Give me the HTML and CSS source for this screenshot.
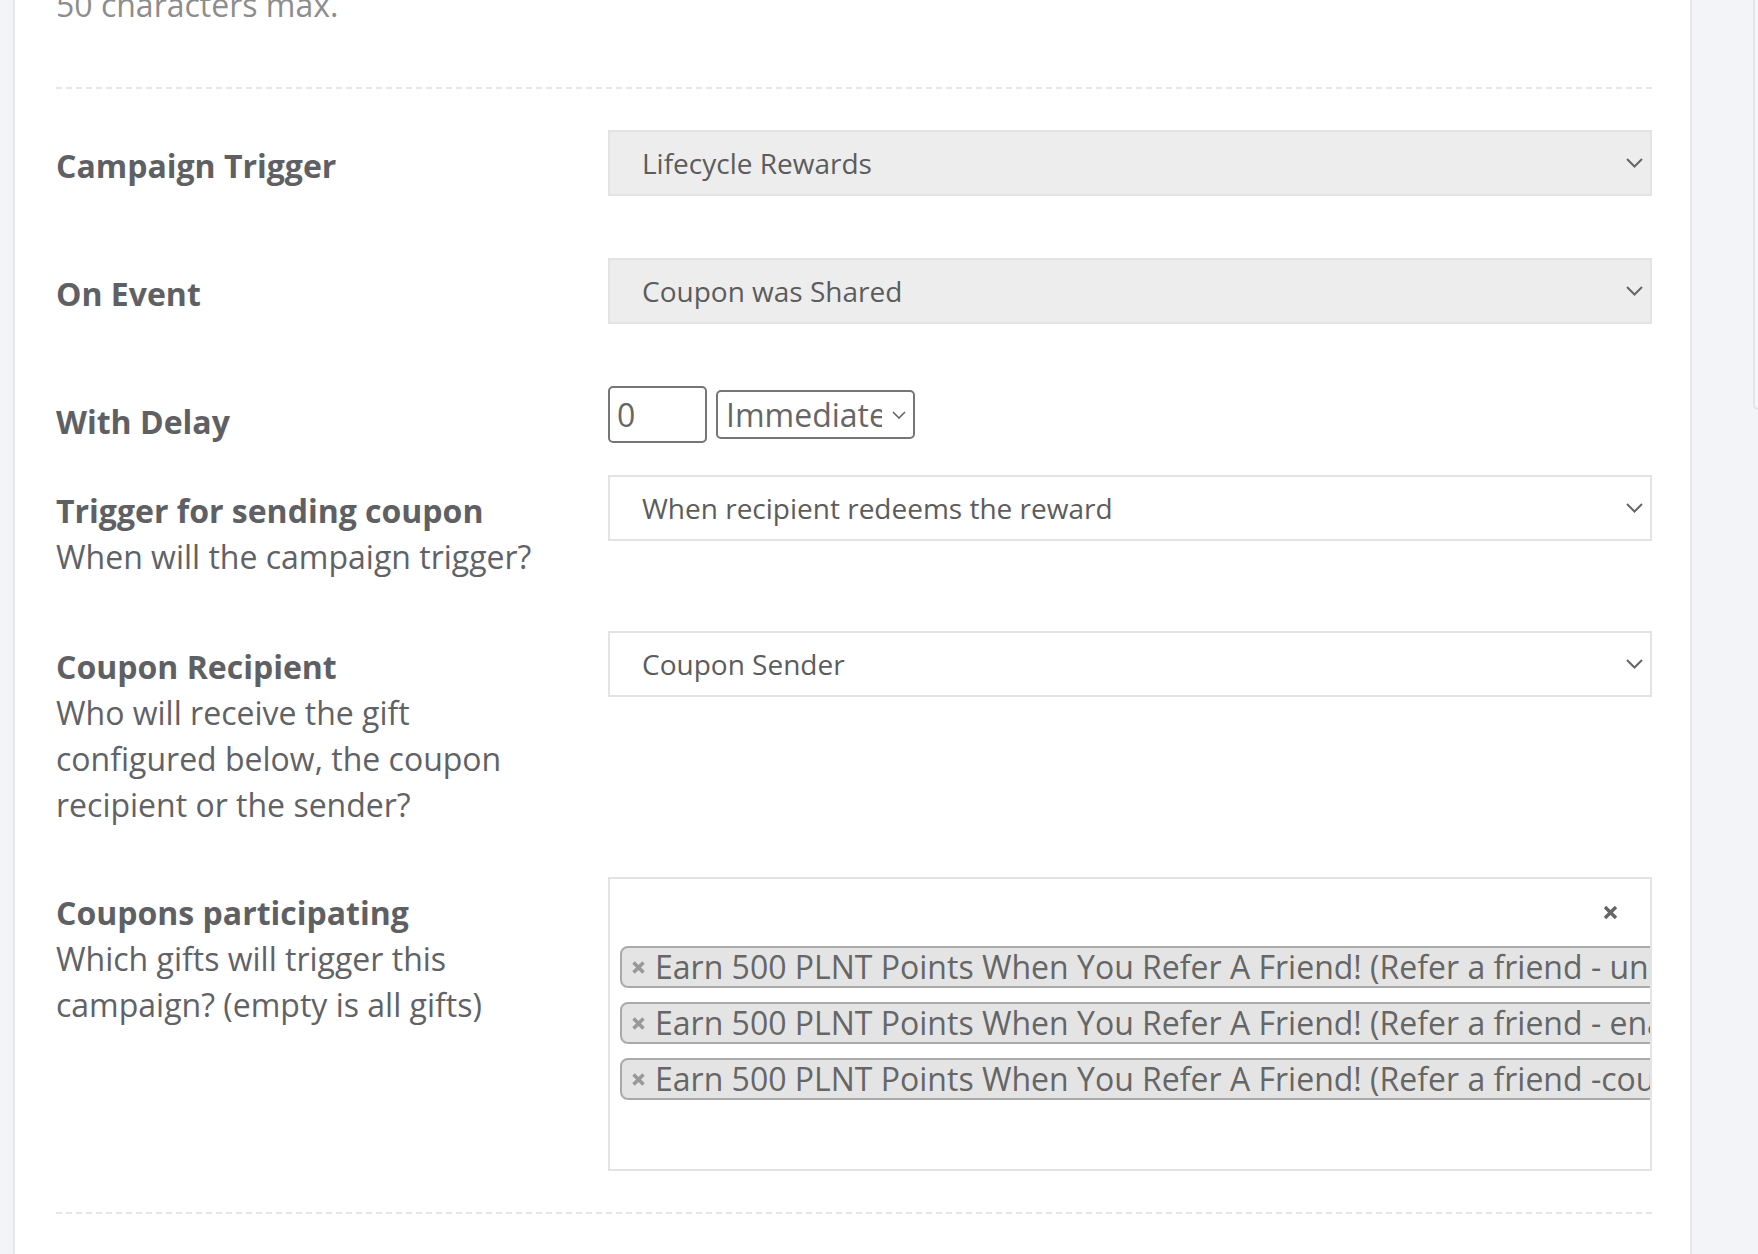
FILE: index.html
```html
<!DOCTYPE html>
<html lang="en">
<head>
    <meta charset="UTF-8">
    <meta name="viewport" content="width=device-width, initial-scale=1.0">
    <title>Campaign Settings</title>
    <link rel="stylesheet" href="styles.css">
</head>
<body>
    <div class="page">
        <div class="card">
            <p class="hint">50 characters max.</p>
            <div class="divider"></div>

            <div class="form-row row-wide">
                <label class="field-label">
                    <span class="title">Campaign Trigger</span>
                </label>
                <div class="field-control">
                    <div class="select-wrap">
                        <select class="select locked">
                            <option>Lifecycle Rewards</option>
                        </select>
                        <svg class="chevron" width="17" height="10" viewBox="0 0 17 10"><polyline points="1,1 8.5,8.5 16,1" fill="none" stroke="#666" stroke-width="2"/></svg>
                    </div>
                </div>
            </div>

            <div class="form-row row-wide">
                <label class="field-label">
                    <span class="title">On Event</span>
                </label>
                <div class="field-control">
                    <div class="select-wrap">
                        <select class="select locked">
                            <option>Coupon was Shared</option>
                        </select>
                        <svg class="chevron" width="17" height="10" viewBox="0 0 17 10"><polyline points="1,1 8.5,8.5 16,1" fill="none" stroke="#666" stroke-width="2"/></svg>
                    </div>
                </div>
            </div>

            <div class="form-row row-delay">
                <label class="field-label">
                    <span class="title">With Delay</span>
                </label>
                <div class="field-control delay">
                    <input type="text" class="delay-input" value="0">
                    <div class="select-wrap small">
                        <select class="delay-select">
                            <option>Immediate</option>
                            <option>Minutes</option>
                            <option>Hours</option>
                            <option>Days</option>
                        </select>
                        <svg class="chevron" width="14" height="8" viewBox="0 0 14 8"><polyline points="1,1 7,7 13,1" fill="none" stroke="#666" stroke-width="1.6"/></svg>
                    </div>
                </div>
            </div>

            <div class="form-row row-trigger">
                <label class="field-label">
                    <span class="title">Trigger for sending coupon</span>
                    When will the campaign trigger?
                </label>
                <div class="field-control">
                    <div class="select-wrap">
                        <select class="select">
                            <option>When recipient redeems the reward</option>
                        </select>
                        <svg class="chevron" width="17" height="10" viewBox="0 0 17 10"><polyline points="1,1 8.5,8.5 16,1" fill="none" stroke="#666" stroke-width="2"/></svg>
                    </div>
                </div>
            </div>

            <div class="form-row">
                <label class="field-label">
                    <span class="title">Coupon Recipient</span>
                    Who will receive the gift configured below, the coupon recipient or the sender?
                </label>
                <div class="field-control">
                    <div class="select-wrap">
                        <select class="select">
                            <option>Coupon Sender</option>
                            <option>Coupon Recipient</option>
                        </select>
                        <svg class="chevron" width="17" height="10" viewBox="0 0 17 10"><polyline points="1,1 8.5,8.5 16,1" fill="none" stroke="#666" stroke-width="2"/></svg>
                    </div>
                </div>
            </div>

            <div class="form-row row-last">
                <label class="field-label">
                    <span class="title">Coupons participating</span>
                    Which gifts will trigger this campaign? (empty is all gifts)
                </label>
                <div class="field-control">
                    <div class="multi">
                        <div class="multi-head">
                            <svg class="clear" width="15" height="15" viewBox="0 0 15 15"><path d="M2 2 L13 13 M13 2 L2 13" stroke="#666" stroke-width="3.4"/></svg>
                        </div>
                        <ul class="tags">
                            <li class="tag"><svg class="tag-x" width="13" height="13" viewBox="0 0 13 13"><path d="M1.5 1.5 L11.5 11.5 M11.5 1.5 L1.5 11.5" stroke="#999" stroke-width="3.6"/></svg>Earn 500 PLNT Points When You Refer A Friend! (Refer a friend - unique code)</li>
                            <li class="tag"><svg class="tag-x" width="13" height="13" viewBox="0 0 13 13"><path d="M1.5 1.5 L11.5 11.5 M11.5 1.5 L1.5 11.5" stroke="#999" stroke-width="3.6"/></svg>Earn 500 PLNT Points When You Refer A Friend! (Refer a friend - enabled)</li>
                            <li class="tag"><svg class="tag-x" width="13" height="13" viewBox="0 0 13 13"><path d="M1.5 1.5 L11.5 11.5 M11.5 1.5 L1.5 11.5" stroke="#999" stroke-width="3.6"/></svg>Earn 500 PLNT Points When You Refer A Friend! (Refer a friend -coupon)</li>
                        </ul>
                    </div>
                </div>
            </div>

            <div class="divider"></div>
        </div>
        <div class="side">
            <div class="side-panel"></div>
        </div>
    </div>
</body>
</html>
```

FILE: styles.css
```css
body {
    margin: 0;
    background-color: #f3f4f8;
    font-family: "Open Sans", "Liberation Sans", sans-serif;
    color: #606266;
    overflow: hidden;
}
.page {
    display: flex;
    height: 1254px;
    padding-left: 13px;
}
.card {
    width: 1679px;
    box-sizing: border-box;
    background: white;
    border-left: 2px solid #e6e7eb;
    border-right: 2px solid #e6e7eb;
    padding: 0 38px 0 41px;
}
.hint {
    margin: -18px 0 0;
    font-size: 32px;
    line-height: 46px;
    color: #8d8d8d;
}
.divider {
    border-top: 2px dashed #e6e6e6;
    margin-top: 59px;
    margin-bottom: 41px;
}
.form-row {
    display: flex;
    align-items: flex-start;
    margin-bottom: 49px;
}
.row-wide {
    margin-bottom: 62px;
}
.row-delay {
    margin-bottom: 30px;
}
.row-trigger {
    margin-bottom: 51px;
}
.row-last {
    margin-bottom: 0;
}
.row-last + .divider {
    margin-top: 41px;
}
.field-label {
    width: 500px;
    padding-right: 52px;
    flex-shrink: 0;
    padding-top: 13px;
    font-size: 32px;
    line-height: 46px;
    color: #606266;
}
.field-label .title {
    display: block;
    font-weight: bold;
    color: #5e6064;
}
.field-control {
    flex: 1;
    min-width: 0;
}
.select-wrap {
    position: relative;
}
.select {
    width: 100%;
    height: 66px;
    box-sizing: border-box;
    appearance: none;
    -webkit-appearance: none;
    border: 2px solid #e3e3e3;
    border-radius: 0;
    background: white;
    padding: 0 60px 0 32px;
    font-family: "Open Sans", "Liberation Sans", sans-serif;
    font-size: 28px;
    color: #5c5c5c;
    outline: none;
}
.select.locked {
    background: #ededed;
}
.chevron {
    position: absolute;
    right: 9px;
    top: 50%;
    margin-top: -5px;
    pointer-events: none;
}
.delay {
    display: flex;
    align-items: center;
    gap: 9px;
}
.delay-input {
    width: 99px;
    height: 57px;
    box-sizing: border-box;
    border: 2px solid #767676;
    border-radius: 5px;
    padding: 0 7px;
    font-family: "Open Sans", "Liberation Sans", sans-serif;
    font-size: 32px;
    color: #666;
    outline: none;
}
.select-wrap.small .chevron {
    right: 9px;
    margin-top: -4px;
}
.delay-select {
    width: 199px;
    height: 49px;
    box-sizing: border-box;
    appearance: none;
    -webkit-appearance: none;
    border: 2px solid #767676;
    border-radius: 5px;
    background: white;
    padding: 0 31px 0 8px;
    font-family: "Open Sans", "Liberation Sans", sans-serif;
    font-size: 32px;
    color: #666;
    outline: none;
}
.multi {
    height: 294px;
    box-sizing: border-box;
    border: 2px solid #e3e3e3;
    background: white;
    overflow: hidden;
}
.multi-head {
    display: flex;
    justify-content: flex-end;
    align-items: center;
    height: 67px;
    padding-right: 32px;
}
.tags {
    list-style: none;
    margin: 0;
    padding: 0 0 0 10px;
    display: flex;
    flex-direction: column;
    align-items: flex-start;
    gap: 14px;
}
.tag {
    display: flex;
    align-items: center;
    white-space: nowrap;
    height: 42px;
    box-sizing: border-box;
    border: 2px solid #aaa;
    border-radius: 8px;
    background-color: #e4e4e4;
    padding: 0 10px 0 10px;
    font-size: 32px;
    line-height: 38px;
    color: #666;
}
.tag-x {
    flex-shrink: 0;
    margin-right: 10px;
}
.side {
    flex: 1;
    padding-left: 61px;
}
.side-panel {
    height: 408px;
    border-left: 2px solid #e3e5ea;
    border-bottom: 2px solid #e3e5ea;
    border-bottom-left-radius: 8px;
    background: #f6f7fa;
}
```
